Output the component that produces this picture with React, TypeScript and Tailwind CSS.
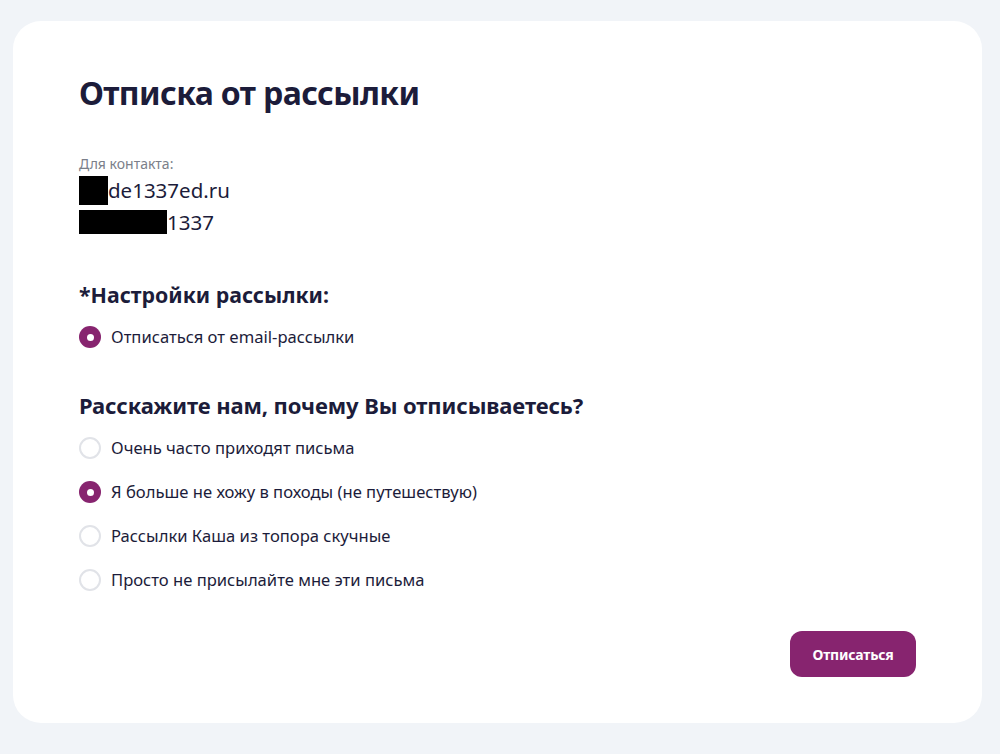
export default function App() {
  const reasons = [
    { label: "Очень часто приходят письма", checked: false },
    { label: "Я больше не хожу в походы (не путешествую)", checked: true },
    { label: "Рассылки Каша из топора скучные", checked: false },
    { label: "Просто не присылайте мне эти письма", checked: false },
  ]

  return (
    <div className="min-h-[754px] bg-[#f1f4f8] px-[13px] pt-[21px] pb-[31px] font-['Noto_Sans',sans-serif] text-[#1c1c3a]">
      <div className="w-[969px] rounded-[28px] bg-white px-[66px] pt-[50px] pb-[46px]">
        <h1 className="text-[32px] font-bold leading-[44px] tracking-[-0.6px]">Отписка от рассылки</h1>

        {/* Contact */}
        <div className="mt-[40px] text-[14px] leading-[18px] text-[#7b7f8a]">Для контакта:</div>
        <div className="mt-[2px] flex items-center text-[20.5px] leading-[30px]">
          <span className="inline-block h-[29px] w-[29px] bg-black" />
          <span>de1337ed.ru</span>
        </div>
        <div className="mt-[4px] flex items-center text-[20.5px] leading-[26px]">
          <span className="inline-block h-[24px] w-[88px] bg-black" />
          <span>1337</span>
        </div>

        {/* Settings */}
        <h2 className="mt-[45px] text-[21.3px] font-bold leading-[30px]">*Настройки рассылки:</h2>
        <div className="mt-[16px]">
          <Radio checked label="Отписаться от email-рассылки" />
        </div>

        {/* Reasons */}
        <h2 className="mt-[42px] text-[22px] font-bold leading-[30px] tracking-[-0.1px]">
          Расскажите нам, почему Вы отписываетесь?
        </h2>
        <div className="mt-[17px] flex flex-col gap-[22px]">
          {reasons.map((r) => (
            <Radio key={r.label} checked={r.checked} label={r.label} />
          ))}
        </div>

        <div className="mt-[40px] flex justify-end">
          <button className="h-[46px] w-[126px] rounded-[12px] bg-[#87246f] text-[14px] font-bold tracking-[-0.2px] text-white">
            Отписаться
          </button>
        </div>
      </div>
    </div>
  )
}

function Radio({ checked, label }: { checked?: boolean; label: string }) {
  return (
    <label className="flex h-[22px] items-center gap-[10px] text-[16.6px]">
      {checked ? (
        <span className="flex h-[22px] w-[22px] items-center justify-center rounded-full bg-[#87246f]">
          <span className="h-[7px] w-[7px] rounded-full bg-white" />
        </span>
      ) : (
        <span className="h-[22px] w-[22px] rounded-full border-2 border-[#e1e3e8] bg-white" />
      )}
      <span>{label}</span>
    </label>
  )
}
